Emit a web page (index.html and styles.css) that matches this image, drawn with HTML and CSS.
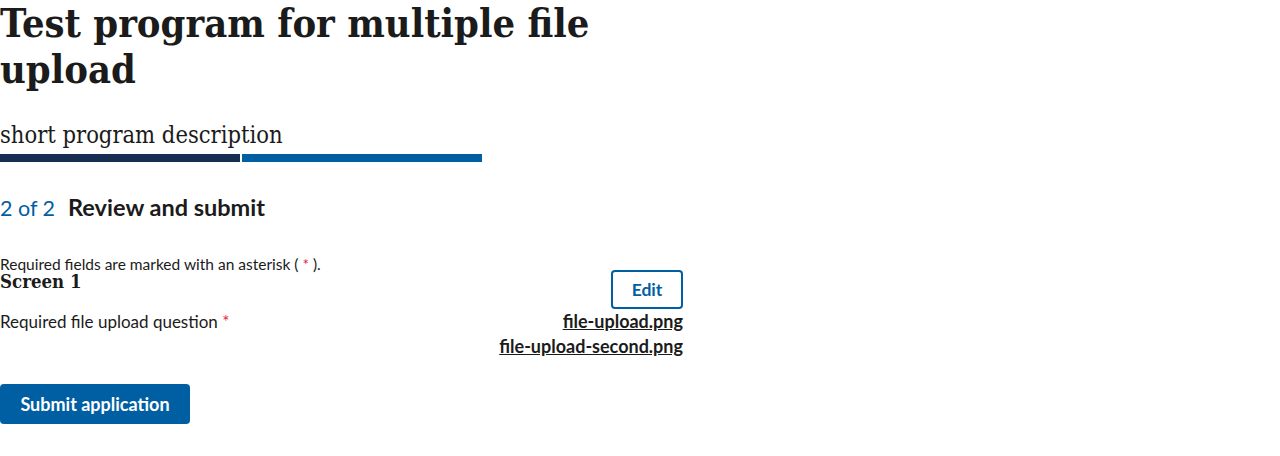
FILE: index.html
```html
<!DOCTYPE html>
<html lang="en">
<head>
<meta charset="utf-8">
<title>Review and submit</title>
<link rel="stylesheet" href="styles.css">
</head>
<body>
<main class="page">
  <h1 class="title">Test program for multiple file upload</h1>
  <p class="description">short program description</p>
  <div class="progress">
    <div class="progress-seg done"></div>
    <div class="progress-seg current"></div>
  </div>
  <h2 class="step"><span class="step-count">2 of 2</span><span class="step-name">Review and submit</span></h2>
  <p class="required-note">Required fields are marked with an asterisk ( <span class="ast">*</span> ).</p>
  <section class="block">
    <div class="block-head">
      <h3 class="block-title">Screen 1</h3>
      <a class="edit-btn" href="#">Edit</a>
    </div>
    <div class="qa">
      <div class="question">Required file upload question <span class="ast">*</span></div>
      <div class="answers">
        <a class="file" href="#">file-upload.png</a>
        <a class="file" href="#">file-upload-second.png</a>
      </div>
    </div>
  </section>
  <button class="submit" type="button">Submit application</button>
</main>
</body>
</html>
```
FILE: styles.css
```css
html, body {
  margin: 0;
  padding: 0;
  background: #ffffff;
}
body {
  font-family: "Lato", "Liberation Sans", sans-serif;
  color: #1b1b1b;
}
.page {
  width: 683px;
}
.title {
  font-family: "DejaVu Serif", "Liberation Serif", serif;
  font-stretch: condensed;
  font-weight: 700;
  font-size: 39.5px;
  line-height: 46px;
  margin: 0;
  width: 640px;
}
.description {
  font-family: "DejaVu Serif", "Liberation Serif", serif;
  font-stretch: condensed;
  font-size: 23.5px;
  line-height: 30px;
  margin: 28px 0 0 0;
}
.progress {
  display: flex;
  gap: 2px;
  width: 482px;
  margin-top: 4px;
}
.progress-seg {
  flex: 1;
  height: 8px;
}
.progress-seg.done { background: #162e51; }
.progress-seg.current { background: #005ea2; }
.step {
  margin: 30px 0 0 0;
  line-height: 30px;
  display: flex;
  align-items: baseline;
  gap: 13px;
}
.step-count {
  font-size: 21.5px;
  font-weight: 400;
  color: #005ea2;
}
.step-name {
  font-size: 23.5px;
  font-weight: 700;
}
.required-note {
  font-size: 15.5px;
  line-height: 18px;
  margin: 32px 0 0 0;
}
.ast { color: #e41d3d; }
.block-head {
  display: flex;
  justify-content: space-between;
  align-items: flex-start;
}
.block-title {
  font-family: "DejaVu Serif", "Liberation Serif", serif;
  font-stretch: condensed;
  font-size: 18.5px;
  line-height: 18px;
  margin: 0;
}
.edit-btn {
  display: block;
  box-sizing: border-box;
  width: 72px;
  height: 39px;
  border: 2px solid #005ea2;
  border-radius: 4px;
  color: #005ea2;
  font-weight: 700;
  font-size: 17.5px;
  line-height: 35px;
  text-align: center;
  text-decoration: none;
  margin-top: -3px;
}
.qa {
  display: flex;
  justify-content: space-between;
  margin-top: 0;
}
.question {
  font-size: 17px;
  line-height: 25px;
}
.answers {
  display: flex;
  flex-direction: column;
  align-items: flex-end;
}
.file {
  font-weight: 700;
  font-size: 18px;
  line-height: 25px;
  color: #1b1b1b;
  text-decoration: underline;
}
.submit {
  display: block;
  margin-top: 25px;
  width: 190px;
  height: 40px;
  border: 0;
  border-radius: 4px;
  background: #005ea2;
  color: #ffffff;
  font-family: "Lato", "Liberation Sans", sans-serif;
  font-weight: 700;
  font-size: 18px;
  padding: 0;
}
```
